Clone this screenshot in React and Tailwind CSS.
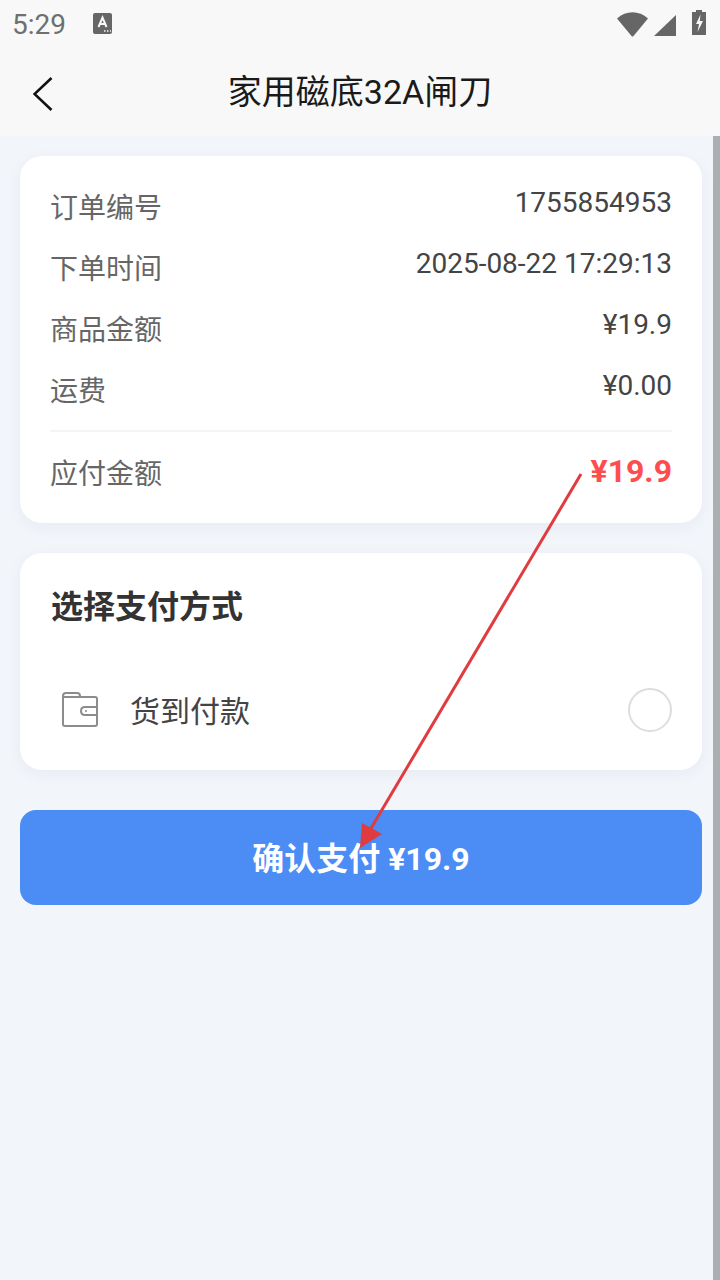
const font = { fontFamily: '"Roboto", "Noto Sans CJK SC", sans-serif' };

function Row({ label, value }) {
  return (
    <div className="flex justify-between items-start h-[61px]">
      <span className="text-[28px] leading-[40px] mt-[2px] text-[#666666]">{label}</span>
      <span className="text-[28px] leading-[32px] text-[#444444]">{value}</span>
    </div>
  );
}

export default function App() {
  return (
    <div className="relative w-[720px] h-[1280px] overflow-hidden bg-[#f2f5fa]" style={font}>
      <div className="h-[136px] bg-[#f8f8f8] flex flex-col">
        <div className="h-[50px] flex items-center justify-between pl-[12px] pr-[14px]">
          <div className="flex items-center gap-[27px]">
            <span className="text-[28px] leading-[50px] text-[#6f6f6f]">5:29</span>
            <svg width="19" height="21" viewBox="0 0 19 21" className="-mt-[3px]">
              <rect x="0" y="0" width="19" height="21" rx="2" fill="#666666" />
              <path d="M5.5 14 L9.5 4.5 L13.5 14 M7 11 H12" stroke="#f8f8f8" strokeWidth="2" fill="none" />
              <path d="M11 18 h1.5 M14 18 h1.5 M17 18 h1" stroke="#f8f8f8" strokeWidth="1.5" />
            </svg>
          </div>
          <div className="flex items-center gap-[16px]">
            <div className="flex items-center gap-[6px]">
              <svg width="31" height="25" viewBox="0 0 31 25" className="mt-[-2px]">
                <path d="M0 6.5 C9 -2 22 -2 31 6.5 L16.5 24 Q15.5 25 14.5 24 Z" fill="#666666" />
              </svg>
              <svg width="22" height="21" viewBox="0 0 22 21">
                <path d="M22 0 V21 H0 Z" fill="#666666" />
              </svg>
            </div>
            <svg width="14" height="25" viewBox="0 0 14 25" className="-mt-[5px]">
              <path d="M4 0 H10 V2 H14 V25 H0 V2 H4 Z" fill="#666666" />
              <path d="M8.5 4.5 L4 14 H7 L5.5 22 L11 11 H7.8 Z" fill="#f8f8f8" />
            </svg>
          </div>
        </div>
        <div className="flex-1 flex items-center justify-center relative">
          <svg className="absolute left-[33px] top-[27px]" width="20" height="34" viewBox="0 0 20 34">
            <path d="M18.5 1 L1.5 17 L18.5 33" stroke="#111111" strokeWidth="2.6" fill="none" />
          </svg>
          <span className="text-[34px] leading-[44px] text-[#1a1a1a] pb-[2px]">家用磁底32A闸刀</span>
        </div>
      </div>

      <div className="flex">
        <main className="w-[713px] shrink-0 pt-[20px] pl-[20px] pr-[11px] flex flex-col">
          <section className="bg-white rounded-[22px] h-[367px] px-[30px] pt-[31px] shadow-[0_4px_16px_rgba(40,60,100,0.05)]">
            <Row label="订单编号" value="1755854953" />
            <Row label="下单时间" value="2025-08-22 17:29:13" />
            <Row label="商品金额" value="¥19.9" />
            <Row label="运费" value="¥0.00" />
            <div className="h-[2px] bg-[#f4f4f4] -mt-[1px]" />
            <div className="flex justify-between items-start mt-[21px]">
              <span className="text-[28px] leading-[40px] mt-[2px] text-[#666666]">应付金额</span>
              <span className="text-[32px] leading-[40px] -mt-[2px] font-bold text-[#ff4d4f]">¥19.9</span>
            </div>
          </section>

          <section className="mt-[30px] bg-white rounded-[22px] h-[217px] px-[30px] pt-[31px] shadow-[0_4px_16px_rgba(40,60,100,0.05)]">
            <h2 className="ml-[1px] text-[32px] leading-[46px] font-bold text-[#333333]">选择支付方式</h2>
            <div className="flex items-center mt-[60px]">
              <svg className="ml-[12px] -mt-[6px]" width="36" height="36" viewBox="0 0 36 36" fill="none" stroke="#8c8c8c" strokeWidth="2">
                <path d="M1 5 Q1 2 4 2 H15 Q18 2 18 5 V6 H33 Q35 6 35 8 V33 Q35 35 33 35 H3 Q1 35 1 33 Z" />
                <path d="M1 6 H18" />
                <path d="M35 16 H23 Q19 16 19 20 Q19 24 23 24 H35" />
                <circle cx="24" cy="20" r="1" fill="#8c8c8c" stroke="none" />
              </svg>
              <span className="ml-[32px] text-[30px] leading-[44px] text-[#444444]">货到付款</span>
              <span className="ml-auto w-[44px] h-[44px] rounded-full border-2 border-[#dddddd] bg-white -mt-[4px]" />
            </div>
          </section>

          <button className="mt-[40px] h-[95px] rounded-[16px] bg-[#4b8cf5] text-white text-[32px] font-bold flex items-center justify-center pt-[2px]">
            确认支付 ¥19.9
          </button>
        </main>
        <div className="w-[7px] h-[1144px] bg-[#adaeb2]" />
      </div>

      <svg className="absolute left-0 top-0 pointer-events-none" width="720" height="1280" viewBox="0 0 720 1280">
        <line x1="581" y1="474" x2="370" y2="830" stroke="#e03c40" strokeWidth="3" />
        <polygon points="360,848 362,823 382,834" fill="#e03c40" />
      </svg>
    </div>
  );
}
